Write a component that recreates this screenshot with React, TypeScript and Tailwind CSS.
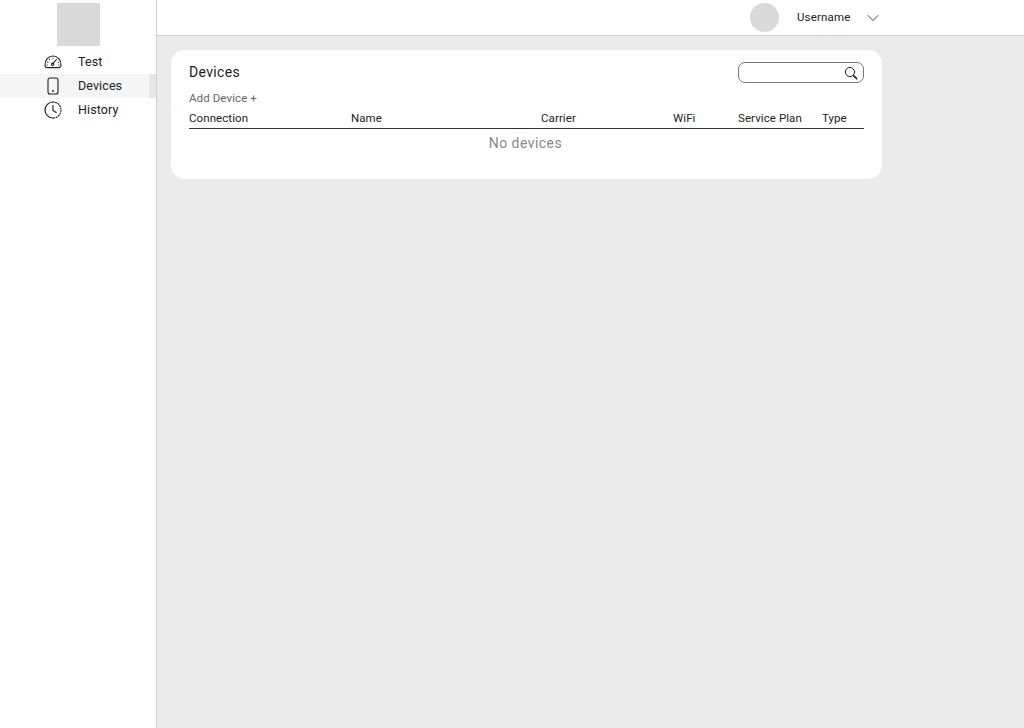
import React from "react";
import { ChevronDown } from "lucide-react";

function GaugeIcon() {
  return (
    <svg width="18" height="14" viewBox="0 0 18 14" fill="none" stroke="#222" strokeWidth="1.1" strokeLinecap="round">
      <path d="M3.2 12.6H14.8C16.2 12.6 16.9 11.6 17 10.2C17.2 5 13.6 1 9 1C4.4 1 .8 5 1 10.2C1.1 11.6 1.8 12.6 3.2 12.6Z" />
      <path d="M8.6 8.6L12.4 4.6" />
      <circle cx="8.6" cy="9.2" r="1.2" />
      <path d="M9 3.2V3.4M5.4 4.2L5.6 4.5M3.6 7L3.9 7.2M3 10H3.3M14.5 7.4L14.2 7.6M14.9 10H14.6" />
    </svg>
  );
}

function PhoneIcon() {
  return (
    <svg width="12" height="18" viewBox="0 0 12 18" fill="none" stroke="#222" strokeWidth="1.1">
      <rect x="1" y="1" width="10" height="16" rx="2" />
      <circle cx="6" cy="14" r="0.9" fill="#222" stroke="none" />
    </svg>
  );
}

function ClockIcon() {
  return (
    <svg width="18" height="18" viewBox="0 0 18 18" fill="none" stroke="#222" strokeWidth="1.2" strokeLinecap="round">
      <path d="M9 1A8 8 0 1 0 9 17" />
      <path d="M9 1A8 8 0 0 1 9 17" strokeDasharray="1 1.6" />
      <path d="M9 4.5V9.5L12.2 11.5" />
    </svg>
  );
}

function SearchIcon() {
  return (
    <svg width="14" height="14" viewBox="0 0 14 14" fill="none" stroke="#222" strokeLinecap="round">
      <circle cx="6" cy="6" r="4.6" strokeWidth="1" />
      <path d="M9.6 9.6L12.8 12.8" strokeWidth="1.6" />
    </svg>
  );
}

const navItems = [
  { label: "Test", icon: <GaugeIcon />, active: false },
  { label: "Devices", icon: <PhoneIcon />, active: true },
  { label: "History", icon: <ClockIcon />, active: false },
];

const columns = [
  { label: "Connection", w: "w-[162px]" },
  { label: "Name", w: "w-[190px]" },
  { label: "Carrier", w: "w-[132px]" },
  { label: "WiFi", w: "w-[65px]" },
  { label: "Service Plan", w: "w-[84px]" },
  { label: "Type", w: "w-[42px]" },
];

export default function App() {
  return (
    <div className="flex h-[728px] w-[1024px] overflow-hidden bg-[#ebebeb] font-['Roboto',sans-serif] text-[#222]">
      {/* Sidebar */}
      <aside className="flex w-[157px] shrink-0 flex-col border-r border-[#cfcfcf] bg-white">
        <div className="ml-[57px] mt-[3px] h-[43px] w-[43px] bg-[#d9d9d9]" />
        <nav className="mt-[4px] flex flex-col">
          {navItems.map((item) => (
            <div key={item.label} className={`flex h-[24px] items-center ${item.active ? "bg-[#f5f5f5]" : ""}`}>
              <div className="ml-[43px] flex w-[20px] justify-center">{item.icon}</div>
              <span className="ml-[15px] flex-1 text-[12.5px] tracking-[0.1px]">{item.label}</span>
              {item.active && <div className="h-full w-[7px] bg-[#e6e6e6]" />}
            </div>
          ))}
        </nav>
      </aside>

      <div className="flex min-w-0 flex-1 flex-col">
        {/* Top bar */}
        <header className="flex h-[36px] shrink-0 items-center border-b border-[#cfcfcf] bg-white pl-[593px]">
          <div className="h-[29px] w-[29px] rounded-full bg-[#d9d9d9]" />
          <span className="ml-[18px] pt-[1px] text-[11.5px] tracking-[0.15px]">Username</span>
          <ChevronDown className="ml-[13px] h-[20px] w-[20px] text-[#333]" strokeWidth={1.1} />
        </header>

        {/* Card */}
        <main className="pl-[14px] pt-[14px]">
          <section className="h-[129px] w-[711px] rounded-[14px] bg-white px-[18px] pt-[12px]">
            <div className="flex items-center justify-between">
              <h1 className="text-[14px] font-normal tracking-[0.35px]">Devices</h1>
              <div className="flex h-[21px] w-[126px] items-center justify-end rounded-[7px] border border-[#777] pr-[5px]">
                <SearchIcon />
              </div>
            </div>
            <div className="mt-[5px] text-[11.5px] leading-[20px] tracking-[0.1px] text-[#666]">Add Device +</div>
            <div className="mt-[1px] flex h-[20px] items-center border-b border-[#333]">
              {columns.map((col) => (
                <div key={col.label} className={`${col.w} shrink-0 text-[11.5px] tracking-[0.08px]`}>
                  {col.label}
                </div>
              ))}
            </div>
            <div className="mt-[4px] pr-[2px] text-center text-[14px] leading-[20px] tracking-[0.45px] text-[#888]">No devices</div>
          </section>
        </main>
      </div>
    </div>
  );
}
